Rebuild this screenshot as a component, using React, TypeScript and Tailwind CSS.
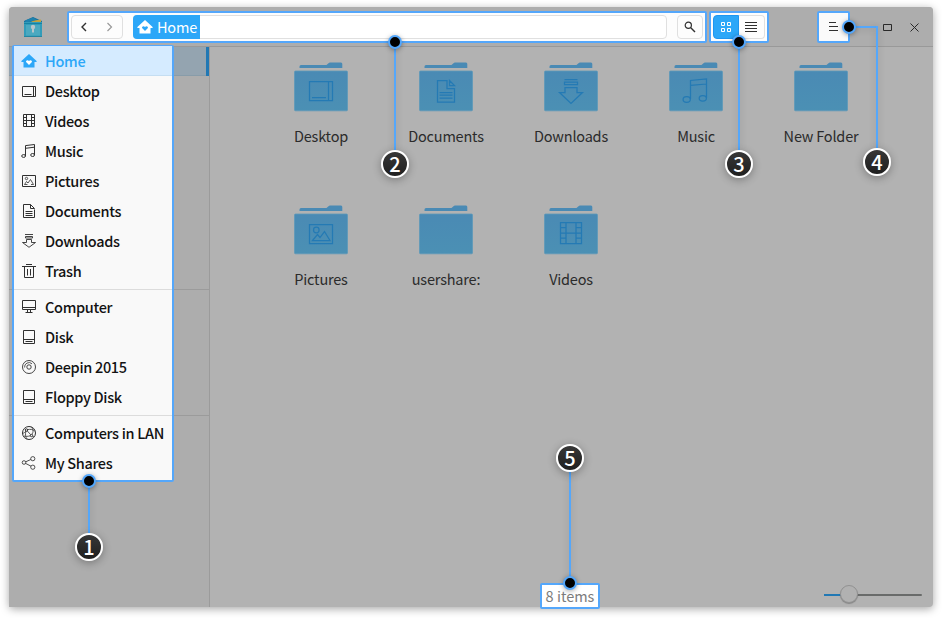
import type { ReactNode } from 'react';

const font = "font-['Noto_Sans_CJK_SC','Noto_Sans',sans-serif]";

function Icon({ size = 16, children }: { size?: number; children: ReactNode }) {
  return (
    <svg
      width={size}
      height={size}
      viewBox={`0 0 ${size} ${size}`}
      fill="none"
      stroke="currentColor"
      strokeWidth={1}
      className="shrink-0"
    >
      {children}
    </svg>
  );
}

function HomeGlyph({ heart }: { heart: string }) {
  return (
    <svg width="16" height="16" viewBox="0 0 16 16" className="shrink-0">
      <path d="M8 1 L0.4 8 V9 H2.5 V14.5 H13.5 V9 H15.6 V8 Z" fill="currentColor" />
      <path d="M8 12 L5.3 9.3 C4.2 7.8 6.5 6.2 8 7.9 C9.5 6.2 11.8 7.8 10.7 9.3 Z" fill={heart} />
    </svg>
  );
}

const small = {
  home: <HomeGlyph heart="#fff" />,
  desktop: (
    <Icon>
      <path d="M1.5 3.5h13v10h-13zM12.5 3.5v10M3.5 11.5h7" />
    </Icon>
  ),
  videos: (
    <Icon>
      <path d="M2.5 1.5h11v12h-11zM5.5 1.5v12M10.5 1.5v12M5.5 7.5h5M2.5 4.5h3M2.5 7.5h3M2.5 10.5h3M10.5 4.5h3M10.5 7.5h3M10.5 10.5h3" />
    </Icon>
  ),
  music: (
    <Icon>
      <path d="M4.5 13V2.6L13.5 1.5V12M4.5 5.3L13.5 4.2" />
      <ellipse cx="2.6" cy="13" rx="1.9" ry="1.4" />
      <ellipse cx="11.6" cy="12" rx="1.9" ry="1.5" />
    </Icon>
  ),
  pictures: (
    <Icon>
      <path d="M1.5 2.5h13v11h-13z" />
      <circle cx="5.5" cy="5.5" r="1.2" strokeWidth=".8" />
      <path d="M3.5 11.5L5.5 8.5L7 10L9.5 6.5L12.5 11.5M3.5 11.5h3M10 11.5h2.5" strokeWidth=".8" />
    </Icon>
  ),
  documents: (
    <Icon>
      <path d="M9.5 1.5h-7v13h11v-8M9.5 1.5v4h4zM4.5 8.5h7M4.5 10.5h7M4.5 12.5h7" />
    </Icon>
  ),
  downloads: (
    <Icon>
      <path d="M4 1.5h8M4.5 3.5h7v1.5h-7zM5.5 9.5h-4L8 14.3l6.5-4.8h-4V6.5h-5z" strokeWidth=".9" />
    </Icon>
  ),
  trash: (
    <Icon>
      <path d="M5 1.5h6M1 3.5h14M3.5 3.5v11h9v-11M6.5 6v6.5M9.5 6v6.5" />
    </Icon>
  ),
  computer: (
    <Icon>
      <path d="M1.5 1.5h13v9h-13zM1.5 8.5h13M6.5 11v2M9.5 11v2M4.5 13.5h7" />
    </Icon>
  ),
  disk: (
    <Icon>
      <path d="M2.5 1.5h11v13h-11zM2.5 10.5h11M4.5 12.5h7" />
    </Icon>
  ),
  disc: (
    <Icon>
      <circle cx="8" cy="8" r="6.5" strokeWidth=".9" />
      <circle cx="8" cy="8" r="2.2" strokeWidth=".9" />
      <path d="M3.6 8.5A4.4 4.4 0 0 1 11 4.8" strokeWidth=".8" />
    </Icon>
  ),
  network: (
    <Icon>
      <circle cx="8" cy="8" r="6.5" />
      <circle cx="5.5" cy="5" r="1.2" />
      <circle cx="10.5" cy="10.5" r="1.2" />
      <path d="M1.6 8.5C3 8 4.5 7 5 6M6.6 4.6C9 4 12 4.5 13.8 6M6.3 6L9.6 9.6M5 6C4 9 4.5 12 6 14M9.4 10.8C7 11.5 4.5 11.5 2.8 11M10 1.8C12.5 4 12.5 7 11 9.4M11.5 11.2L13 12" strokeWidth=".8" />
    </Icon>
  ),
  shares: (
    <Icon>
      <g strokeWidth=".85">
        <circle cx="3" cy="7.5" r="1.8" />
        <circle cx="11.8" cy="3.7" r="2.1" />
        <circle cx="11.8" cy="12.2" r="2.1" />
        <path d="M4.7 6.8L9.8 4.5M4.6 8.4L10 11.2" />
      </g>
    </Icon>
  ),
};

const places: { label: string; icon: ReactNode }[][] = [
  [
    { label: 'Home', icon: small.home },
    { label: 'Desktop', icon: small.desktop },
    { label: 'Videos', icon: small.videos },
    { label: 'Music', icon: small.music },
    { label: 'Pictures', icon: small.pictures },
    { label: 'Documents', icon: small.documents },
    { label: 'Downloads', icon: small.downloads },
    { label: 'Trash', icon: small.trash },
  ],
  [
    { label: 'Computer', icon: small.computer },
    { label: 'Disk', icon: small.disk },
    { label: 'Deepin 2015', icon: small.disc },
    { label: 'Floppy Disk', icon: small.disk },
  ],
  [
    { label: 'Computers in LAN', icon: small.network },
    { label: 'My Shares', icon: small.shares },
  ],
];

/* Emblems share the folder's 54x50 coordinate space. */
const folders: { label: string; emblem?: ReactNode }[] = [
  { label: 'Desktop', emblem: <path d="M15.5 19.5h23v19h-23zM34.5 19.5v19M18 35.5h14" /> },
  {
    label: 'Documents',
    emblem: <path d="M28 18.5H18.5v21.5h17V26.5H28zM30.5 18.5l5 5h-5zM20.5 30.5h13M20.5 33.2h13M20.5 36h13" />,
  },
  {
    label: 'Downloads',
    emblem: <path d="M20.5 17.5h13M20.5 20h13v2.5h-13zM21 25.5h12v5h5.5L27 41.5L15.5 30.5H21z" />,
  },
  {
    label: 'Music',
    emblem: (
      <>
        <path d="M21.5 37V18.5L37.5 17V36M21.5 23.3L37.5 22" />
        <ellipse cx="17.7" cy="37.5" rx="3.6" ry="2.8" />
        <ellipse cx="33.8" cy="36.3" rx="3.6" ry="2.8" />
      </>
    ),
  },
  { label: 'New Folder' },
  {
    label: 'Pictures',
    emblem: (
      <>
        <path d="M15.5 19.5h23v19h-23zM18.5 35.5L23.5 29.5L26 32.5L30.5 26.5L36 35.5z" />
        <circle cx="22.3" cy="25" r="2.8" />
      </>
    ),
  },
  { label: 'usershare:' },
  {
    label: 'Videos',
    emblem: (
      <path d="M16.5 17.5h21v21h-21zM22 17.5v21M32 17.5v21M22 28h10M16.5 22.7h5.5M16.5 28h5.5M16.5 33.2h5.5M32 22.7h5.5M32 28h5.5M32 33.2h5.5" />
    ),
  },
];

function Folder({ label, emblem }: { label: string; emblem?: ReactNode }) {
  return (
    <div className="flex h-[143px] w-[125px] flex-col items-center">
      <svg width="54" height="50" viewBox="0 0 54 50" className="shrink-0">
        <defs>
          <linearGradient id="folder" x1="0" y1="0" x2="0" y2="1">
            <stop offset="0" stopColor="#4a8ab4" />
            <stop offset="1" stopColor="#4b90b4" />
          </linearGradient>
        </defs>
        <path d="M5.5 6V4.5Q5.5 3 7 3H32.5L34.5 1.2Q35.2 .5 36 .5H47Q48.3 .5 48.3 2V6Z" fill="#4a8ab4" />
        <rect x=".5" y="9" width="53" height="39.8" rx="1" fill="url(#folder)" stroke="#5d99b9" strokeWidth=".8" />
        <g fill="none" stroke="#247ab4" strokeWidth="1.25">
          {emblem}
        </g>
      </svg>
      <span className="mt-[13px] text-[14.5px] leading-[22px] tracking-[-0.2px] text-[#2b2b2b]">{label}</span>
    </div>
  );
}

function Sidebar() {
  return (
    <aside className="relative w-[201px] shrink-0 border-r border-[#9b9b9b] bg-[#adadad]">
      <div className="absolute inset-x-0 top-0 h-[29px] border-b border-[#889ca9] bg-[#94a4b0]" />
      <div className="absolute right-0 top-0 h-[29px] w-[3px] bg-[#2178b4]" />
      <div className="absolute inset-x-0 top-[242px] h-px bg-[#9b9b9b]" />
      <div className="absolute inset-x-0 top-[368px] h-px bg-[#9b9b9b]" />
      <nav className="relative -mt-[2px] ml-[3px] h-[437px] w-[162px] rounded-[2px] border-2 border-[#54a7fb] bg-[#f9f9f9] text-[#131313]">
        {places.map((group, g) => (
          <div key={g} className={g > 0 ? 'mt-[3px] border-t border-[#dcdcdc] pt-[2px]' : '-mt-px'}>
            {group.map(({ label, icon }) => (
              <div
                key={label}
                className={
                  label === 'Home'
                    ? 'flex h-[30px] items-center gap-2 bg-[#d5ebff] pl-[7px] text-[#2ca7f8] shadow-[inset_0_-1px_0_#c5def2]'
                    : 'flex h-[30px] items-center gap-2 pl-[7px]'
                }
              >
                <span className={label === 'Home' ? 'flex text-[#2ca7f8]' : 'flex text-[#303030]'}>{icon}</span>
                <span className="whitespace-nowrap text-[14.5px] font-medium leading-[22px] tracking-[-0.32px]">
                  {label}
                </span>
              </div>
            ))}
          </div>
        ))}
      </nav>
    </aside>
  );
}

function TitleBar() {
  return (
    <header className="flex h-10 shrink-0 items-start rounded-t-[4px] border-b border-[#999] bg-[#adadad] pt-1">
      <svg width="20" height="22" viewBox="0 0 20 22" className="ml-[14px] mt-[5px] shrink-0">
        <path d="M1 5L10 1L19 5V8H1Z" fill="#17709b" />
        <path d="M11 4.5L18 3.5V7H5Z" fill="#c1a241" />
        <path d="M2 4.5L10 1.5L14 3.5L3 7Z" fill="#1f81ad" />
        <rect x="1" y="6" width="18" height="15" fill="#329cb9" />
        <path d="M1 7.5h18" stroke="#1682a4" />
        <rect x="3" y="9" width="14" height="10.5" fill="#4ba9c0" />
        <circle cx="10" cy="11" r="2.2" fill="#b8c5c9" />
        <path d="M9 12v4.5h2V12" fill="#b8c5c9" />
        <path d="M1 20.5h18" stroke="#2486a1" />
      </svg>
      <div className="ml-6 flex h-8 w-[640px] shrink-0 items-center rounded-[2px] border-2 border-[#54a7fb] bg-[#fdfdfd] px-[2px]">
        <div className="flex h-6 w-[52px] items-center justify-between rounded-[4px] border border-[#e0e0e0] px-2 text-[#303030]">
          <svg width="9" height="10" viewBox="0 0 9 10" fill="none" stroke="currentColor" strokeWidth="1.4">
            <path d="M6 1L2 5L6 9" />
          </svg>
          <svg width="9" height="10" viewBox="0 0 9 10" fill="none" stroke="#999" strokeWidth="1.2">
            <path d="M2.5 1L6.5 5L2.5 9" />
          </svg>
        </div>
        <div className="ml-[10px] flex h-6 w-[534px] rounded-[4px] border border-[#e0e0e0] bg-white">
          <div className="-m-px flex h-6 w-[67px] items-center gap-1 rounded-l-[4px] bg-[#2ca7f8] pl-1 text-white">
            <HomeGlyph heart="#2ca7f8" />
            <span className="text-[14.5px] leading-[22px] tracking-[-0.2px]">Home</span>
          </div>
        </div>
        <div className="ml-[10px] flex h-6 w-[26px] items-center justify-center rounded-[4px] border border-[#e0e0e0] text-[#303030]">
          <svg width="12" height="12" viewBox="0 0 12 12" fill="none" stroke="currentColor" strokeWidth="1.2">
            <circle cx="4.3" cy="4.3" r="3.1" />
            <path d="M6.8 6.8L11 11" strokeWidth="1.4" />
          </svg>
        </div>
      </div>
      <div className="ml-[2px] flex h-8 w-[60px] shrink-0 items-center rounded-[2px] border-2 border-[#54a7fb] bg-[#fdfdfd] px-[2px]">
        <div className="flex h-6 w-[26px] items-center justify-center rounded-l-[4px] border border-[#1f96f0] bg-[#2ca7f8] text-white">
          <Icon size={10}>
            <path d="M.5.5h3v3h-3zM6.5.5h3v3h-3zM.5 6.5h3v3h-3zM6.5 6.5h3v3h-3z" />
          </Icon>
        </div>
        <div className="flex h-6 w-[26px] items-center rounded-r-[4px] border border-l-0 border-[#e0e0e0] pl-[6px] text-[#303030]">
          <Icon size={12}>
            <path d="M0 1.5h12M0 4.5h12M0 7.5h12M0 10.5h12" />
          </Icon>
        </div>
      </div>
      <div className="ml-12 flex h-8 w-[33px] shrink-0 items-center rounded-[2px] border-2 border-[#54a7fb] bg-[#fafafa] pl-[10px] text-[#303030]">
        <Icon size={10}>
          <path d="M0 .5h7M0 4.5h9M0 8.5h9" />
        </Icon>
      </div>
      <svg width="10" height="8" viewBox="0 0 10 8" fill="none" stroke="#292929" className="ml-[33px] mt-[13px] shrink-0">
        <path d="M.5 .5h8v6h-8z" />
      </svg>
      <svg width="9" height="9" viewBox="0 0 9 9" fill="none" stroke="#292929" className="ml-[17px] mt-3 shrink-0">
        <path d="M.5.5L8.5 8.5M8.5.5L.5 8.5" />
      </svg>
    </header>
  );
}

function Dot({ at }: { at: string }) {
  return (
    <div
      className={`absolute size-[14px] rounded-full border-2 border-[#54a7fb] bg-black shadow-[0_1px_5px_rgba(0,0,0,0.35)] ${at}`}
    />
  );
}

function Badge({ n, at }: { n: number; at: string }) {
  return (
    <div
      className={`absolute flex size-7 items-center justify-center rounded-full border-2 border-white bg-linear-to-b from-[#373737] to-[#202020] pb-px text-[20px] font-medium leading-6 text-white shadow-[0_2px_8px_rgba(0,0,0,0.3)] ${at}`}
    >
      {n}
    </div>
  );
}

function Line({ at }: { at: string }) {
  return <div className={`absolute bg-[#54a7fb] shadow-[0_1px_7px_rgba(0,0,0,0.18)] ${at}`} />;
}

export default function App() {
  return (
    <div className={`relative h-[618px] w-[942px] overflow-hidden bg-white pl-[9px] pt-[7px] ${font}`}>
      <div className="flex h-[600px] w-[924px] flex-col rounded-[4px] bg-[#b2b2b2] shadow-[0_2px_9px_rgba(0,0,0,0.35)]">
        <TitleBar />
        <div className="flex min-h-0 grow">
          <Sidebar />
          <main className="flex min-w-0 grow flex-col">
            <div className="ml-[48.5px] mt-[15px] flex w-[625px] grow flex-wrap content-start">
              {folders.map((f) => (
                <Folder key={f.label} {...f} />
              ))}
            </div>
            <footer className="flex h-6 shrink-0 items-start">
              <div className="ml-[330px] flex h-[26px] w-[60px] items-center justify-center rounded-[2px] border-2 border-[#54a7fb] bg-white text-[14.5px] leading-[22px] text-[#7c7c7c]">
                8 items
              </div>
              <div className="relative ml-[224px] mt-[11px] flex h-[2px] w-[98px] rounded-full bg-[#696b6a]">
                <div className="h-[2px] w-[25px] bg-[#2178b4]" />
                <div className="absolute -top-[9px] left-4 size-[18px] rounded-full border border-[#929292] bg-[#b1b1b1] shadow-[0_1px_1px_rgba(0,0,0,0.25)]" />
              </div>
            </footer>
          </main>
        </div>
      </div>

      <Line at="left-[88px] top-[481px] h-[54px] w-[2px]" />
      <Line at="left-[394px] top-[42px] h-[109px] w-[2px]" />
      <Line at="left-[738px] top-[42px] h-[109px] w-[2px]" />
      <Line at="left-[849px] top-[26px] h-[2px] w-[29px]" />
      <Line at="left-[876px] top-[26px] h-[123px] w-[2px]" />
      <Line at="left-[569px] top-[471px] h-[112px] w-[2px]" />
      <Dot at="left-[82px] top-[474px]" />
      <Dot at="left-[388px] top-[35px]" />
      <Dot at="left-[732px] top-[35px]" />
      <Dot at="left-[842px] top-[20px]" />
      <Dot at="left-[563px] top-[576px]" />
      <Badge n={1} at="left-[75px] top-[533px]" />
      <Badge n={2} at="left-[381px] top-[150px]" />
      <Badge n={3} at="left-[725px] top-[150px]" />
      <Badge n={4} at="left-[863px] top-[148px]" />
      <Badge n={5} at="left-[556px] top-[444px]" />
    </div>
  );
}
